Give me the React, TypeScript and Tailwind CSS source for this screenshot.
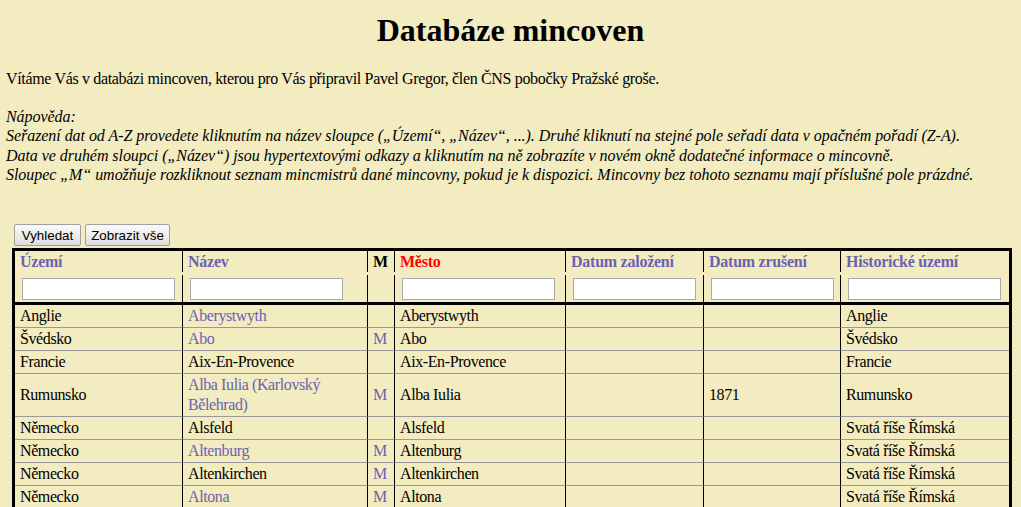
import React from "react";

const LINK = "text-[#6b62b3]";

type Row = {
  uzemi: string;
  nazev: string;
  link: boolean;
  m: boolean;
  mesto: string;
  zal: string;
  zrus: string;
  hist: string;
};

const rows: Row[] = [
  { uzemi: "Anglie", nazev: "Aberystwyth", link: true, m: false, mesto: "Aberystwyth", zal: "", zrus: "", hist: "Anglie" },
  { uzemi: "Švédsko", nazev: "Abo", link: true, m: true, mesto: "Abo", zal: "", zrus: "", hist: "Švédsko" },
  { uzemi: "Francie", nazev: "Aix-En-Provence", link: false, m: false, mesto: "Aix-En-Provence", zal: "", zrus: "", hist: "Francie" },
  { uzemi: "Rumunsko", nazev: "Alba Iulia (Karlovský Bělehrad)", link: true, m: true, mesto: "Alba Iulia", zal: "", zrus: "1871", hist: "Rumunsko" },
  { uzemi: "Německo", nazev: "Alsfeld", link: false, m: false, mesto: "Alsfeld", zal: "", zrus: "", hist: "Svatá říše Římská" },
  { uzemi: "Německo", nazev: "Altenburg", link: true, m: true, mesto: "Altenburg", zal: "", zrus: "", hist: "Svatá říše Římská" },
  { uzemi: "Německo", nazev: "Altenkirchen", link: false, m: true, mesto: "Altenkirchen", zal: "", zrus: "", hist: "Svatá říše Římská" },
  { uzemi: "Německo", nazev: "Altona", link: true, m: true, mesto: "Altona", zal: "", zrus: "", hist: "Svatá říše Římská" },
];

const th = "text-left font-bold tracking-[-0.25px] pl-[5px] py-[1px] leading-[19px] align-middle whitespace-nowrap";
const thBorder = "border-r border-black";
const inCell = "pl-[5px] pt-[3px] pb-[2px] border-b-[3px] border-black align-top";
const td = "pl-[5px] pr-[2px] py-[1px] leading-[20px] tracking-[-0.4px] align-middle border-b border-b-[#999999]";
const tdR = "border-r border-r-black";

function Inp({ w }: { w: "wide" | "narrow" }) {
  return (
    <input
      type="text"
      className={
        "block ml-[2px] h-[22px] border border-[#a9a9a9] bg-white outline-none " +
        (w === "wide" ? "w-[153px]" : "w-[123px]")
      }
    />
  );
}

export default function App() {
  return (
    <div
      className="min-h-screen w-full bg-[#f3ecc1] text-black text-[16px] px-[6px] pt-[12px] overflow-hidden"
      style={{ fontFamily: '"Liberation Serif", "Times New Roman", serif' }}
    >
      <h1 className="text-center text-[32px] font-bold leading-[37px]">Databáze mincoven</h1>

      <p className="mt-[20px] leading-[19px] tracking-[-0.34px] whitespace-nowrap">
        Vítáme Vás v databázi mincoven, kterou pro Vás připravil Pavel Gregor, člen ČNS pobočky Pražské groše.
      </p>

      <p className="mt-[19px] italic leading-[19.3px] tracking-[-0.05px] whitespace-nowrap">
        Nápověda:
        <br />
        Seřazení dat od A-Z provedete kliknutím na název sloupce („Území“, „Název“, ...). Druhé kliknutí na stejné pole seřadí data v opačném pořadí (Z-A).
        <br />
        Data ve druhém sloupci („Název“) jsou hypertextovými odkazy a kliknutím na ně zobrazíte v novém okně dodatečné informace o mincovně.
        <br />
        Sloupec „M“ umožňuje rozkliknout seznam mincmistrů dané mincovny, pokud je k dispozici. Mincovny bez tohoto seznamu mají příslušné pole prázdné.
      </p>

      <div
        className="mt-[40px] ml-[8px] flex gap-[4px]"
        style={{ fontFamily: '"Liberation Sans", Arial, sans-serif' }}
      >
        <button className="w-[67px] h-[22px] text-[13.33px] leading-none rounded-[2px] border border-[#a0a0a0] bg-linear-to-b from-[#fbfbfb] to-[#dedede] text-black">
          Vyhledat
        </button>
        <button className="w-[85px] h-[22px] text-[13.33px] leading-none rounded-[2px] border border-[#a0a0a0] bg-linear-to-b from-[#fbfbfb] to-[#dedede] text-black">
          Zobrazit vše
        </button>
      </div>

      <table className="mt-[2px] ml-[6px] table-fixed w-[1000px] border-separate border-spacing-0 border-[3px] border-black">
        <colgroup>
          <col className="w-[168px]" />
          <col className="w-[185px]" />
          <col className="w-[27px]" />
          <col className="w-[171px]" />
          <col className="w-[138px]" />
          <col className="w-[137px]" />
          <col className="w-[168px]" />
        </colgroup>
        <thead>
          <tr>
            <th className={`${th} ${thBorder} ${LINK}`}>Území</th>
            <th className={`${th} ${thBorder} ${LINK}`}>Název</th>
            <th className={`${th} ${thBorder} text-black`}>M</th>
            <th className={`${th} ${thBorder} text-[#ff0000]`}>Město</th>
            <th className={`${th} ${thBorder} ${LINK}`}>Datum založení</th>
            <th className={`${th} ${thBorder} ${LINK}`}>Datum zrušení</th>
            <th className={`${th} ${LINK}`}>Historické území</th>
          </tr>
          <tr>
            <td colSpan={7} className="h-[3px] p-0 leading-[0] text-[0px]"></td>
          </tr>
          <tr>
            <td className={`${inCell} border-r`}><Inp w="wide" /></td>
            <td className={`${inCell} border-r`}><Inp w="wide" /></td>
            <td className={`${inCell} border-r`}></td>
            <td className={`${inCell} border-r`}><Inp w="wide" /></td>
            <td className={`${inCell} border-r`}><Inp w="narrow" /></td>
            <td className={`${inCell} border-r`}><Inp w="narrow" /></td>
            <td className={inCell}><Inp w="wide" /></td>
          </tr>
        </thead>
        <tbody>
          {rows.map((r, i) => (
            <tr key={i}>
              <td className={`${td} ${tdR}`}>{r.uzemi}</td>
              <td className={`${td} ${tdR} ${r.link ? LINK : ""}`}>{r.nazev}</td>
              <td className={`${td} ${tdR} ${LINK}`}>{r.m ? "M" : ""}</td>
              <td className={`${td} ${tdR}`}>{r.mesto}</td>
              <td className={`${td} ${tdR}`}>{r.zal}</td>
              <td className={`${td} ${tdR}`}>{r.zrus}</td>
              <td className={td}>{r.hist}</td>
            </tr>
          ))}
        </tbody>
      </table>
    </div>
  );
}
